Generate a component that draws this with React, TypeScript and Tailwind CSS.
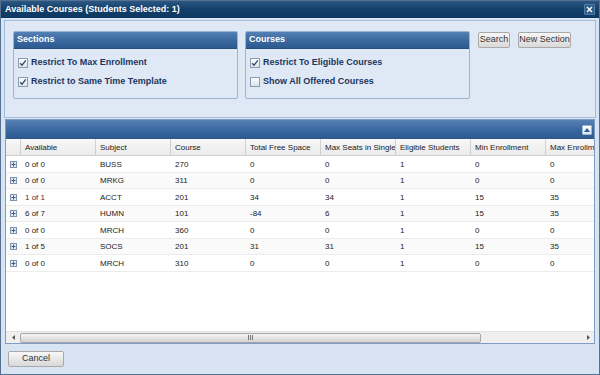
import React from "react";

type CourseRow = {
  available: string;
  subject: string;
  course: string;
  freeSpace: string;
  maxSeats: string;
  eligible: string;
  minEnroll: string;
  maxEnroll: string;
};

const columns = [
  "Available",
  "Subject",
  "Course",
  "Total Free Space",
  "Max Seats in Single",
  "Eligible Students",
  "Min Enrollment",
  "Max Enrollment",
];

const rows: CourseRow[] = [
  { available: "0 of 0", subject: "BUSS", course: "270", freeSpace: "0", maxSeats: "0", eligible: "1", minEnroll: "0", maxEnroll: "0" },
  { available: "0 of 0", subject: "MRKG", course: "311", freeSpace: "0", maxSeats: "0", eligible: "1", minEnroll: "0", maxEnroll: "0" },
  { available: "1 of 1", subject: "ACCT", course: "201", freeSpace: "34", maxSeats: "34", eligible: "1", minEnroll: "15", maxEnroll: "35" },
  { available: "6 of 7", subject: "HUMN", course: "101", freeSpace: "-84", maxSeats: "6", eligible: "1", minEnroll: "15", maxEnroll: "35" },
  { available: "0 of 0", subject: "MRCH", course: "360", freeSpace: "0", maxSeats: "0", eligible: "1", minEnroll: "0", maxEnroll: "0" },
  { available: "1 of 5", subject: "SOCS", course: "201", freeSpace: "31", maxSeats: "31", eligible: "1", minEnroll: "15", maxEnroll: "35" },
  { available: "0 of 0", subject: "MRCH", course: "310", freeSpace: "0", maxSeats: "0", eligible: "1", minEnroll: "0", maxEnroll: "0" },
];

const Checkbox = ({ checked }: { checked: boolean }) => (
  <div className="w-[10px] h-[10px] border border-[#8a9bb0] bg-gradient-to-b from-[#fdfdfd] to-[#dfe3e8] flex items-center justify-center shrink-0">
    {checked && (
      <svg width="8" height="8" viewBox="0 0 8 8">
        <path d="M1.2 4.2 L3 6.2 L6.8 1.4" fill="none" stroke="#2d4a73" strokeWidth="1.3" />
      </svg>
    )}
  </div>
);

const GroupBox = ({ title, items }: { title: string; items: { label: string; checked: boolean }[] }) => (
  <div className="w-[225px] h-[68px] border border-[#99b3d3] rounded-[2px] bg-[#dfe8f5] flex flex-col overflow-hidden">
    <div className="h-[17px] bg-gradient-to-b from-[#5381b5] via-[#3c6aa0] to-[#2d5a8f] border-b border-[#27507f] flex items-center pl-[3px] text-white font-bold text-[9px]">
      {title}
    </div>
    <div className="flex flex-col gap-[9px] pl-[4px] pt-[9px]">
      {items.map((it) => (
        <div key={it.label} className="flex items-center gap-[3px] h-[10px]">
          <Checkbox checked={it.checked} />
          <span className="text-[9px] font-bold text-[#1a3761]">{it.label}</span>
        </div>
      ))}
    </div>
  </div>
);

const Button = ({ label, className }: { label: string; className: string }) => (
  <div
    className={`h-[16px] border border-[#a9a9a9] rounded-[2px] bg-gradient-to-b from-[#f7f7f7] to-[#d9d9d9] flex items-center justify-center text-[9px] text-[#333] ${className}`}
  >
    {label}
  </div>
);

const Expander = () => (
  <div className="w-[7px] h-[7px] border border-[#7d93ae] bg-[#e3e9f1] flex items-center justify-center">
    <svg width="5" height="5" viewBox="0 0 5 5">
      <path d="M0.5 2.5 H4.5 M2.5 0.5 V4.5" stroke="#3f5d82" strokeWidth="1" />
    </svg>
  </div>
);

export default function App() {
  return (
    <div
      className="w-[600px] h-[375px] border border-[#56708f] bg-[#d9e4f2] flex flex-col overflow-hidden"
      style={{ fontFamily: '"Liberation Sans", Arial, sans-serif' }}
    >
      {/* title bar */}
      <div className="h-[17px] shrink-0 bg-gradient-to-b from-[#2b5784] via-[#123f6a] to-[#0e3862] flex items-center justify-between pl-[4px] pr-[4px]">
        <span className="text-white font-bold text-[9px]">Available Courses (Students Selected: 1)</span>
        <div className="w-[11px] h-[11px] bg-[#2f5d89] border border-[#557ea6] rounded-[1px] flex items-center justify-center">
          <svg width="7" height="7" viewBox="0 0 7 7">
            <path d="M1 1 L6 6 M6 1 L1 6" stroke="#ffffff" strokeWidth="1.4" />
          </svg>
        </div>
      </div>

      <div className="flex flex-col px-[3px] pt-[2px] flex-1">
        {/* filter panel */}
        <div className="h-[98px] shrink-0 border border-[#a3bcdb] bg-[#dfe9f6] flex items-start gap-[7px] pl-[8px] pt-[10px]">
          <GroupBox
            title="Sections"
            items={[
              { label: "Restrict To Max Enrollment", checked: true },
              { label: "Restrict to Same Time Template", checked: true },
            ]}
          />
          <GroupBox
            title="Courses"
            items={[
              { label: "Restrict To Eligible Courses", checked: true },
              { label: "Show All Offered Courses", checked: false },
            ]}
          />
          <div className="flex gap-[8px] pt-[1px] pl-[1px]">
            <Button label="Search" className="w-[32px]" />
            <Button label="New Section" className="w-[53px]" />
          </div>
        </div>

        {/* grid */}
        <div className="h-[225px] shrink-0 mt-[1px] ml-[1px] mr-[1px] border border-[#7f9cc2] bg-white flex flex-col">
          <div className="h-[19px] shrink-0 bg-gradient-to-b from-[#5782b3] via-[#3b68a0] to-[#2b588c] flex items-center justify-end pr-[2px]">
            <div className="w-[10px] h-[10px] bg-gradient-to-b from-white to-[#dbe6f3] border border-[#9fb8d6] rounded-[1px] flex items-center justify-center">
              <svg width="6" height="4" viewBox="0 0 6 4">
                <path d="M0 4 L3 0 L6 4 Z" fill="#2d5b94" />
              </svg>
            </div>
          </div>
          <div className="flex-1 flex flex-col overflow-hidden">
            {/* column headers */}
            <div className="h-[17px] shrink-0 flex bg-gradient-to-b from-[#f7f7f7] to-[#ebebeb] border-b border-[#d0d0d0] text-[8px] text-[#222]">
              <div className="w-[15px] shrink-0 border-r border-[#d0d0d0]" />
              {columns.map((c) => (
                <div
                  key={c}
                  className="w-[75px] shrink-0 border-r border-[#d0d0d0] pl-[4px] pt-[1px] flex items-center whitespace-nowrap overflow-hidden"
                >
                  {c}
                </div>
              ))}
            </div>
            {/* rows */}
            <div className="flex-1 flex flex-col">
              {rows.map((r, i) => {
                const cells = [r.available, r.subject, r.course, r.freeSpace, r.maxSeats, r.eligible, r.minEnroll, r.maxEnroll];
                return (
                  <div
                    key={i}
                    className={`h-[16.5px] shrink-0 flex border-b border-[#ececec] text-[8px] text-[#222] ${i % 2 === 1 ? "bg-[#fafafa]" : "bg-white"}`}
                  >
                    <div className="w-[15px] shrink-0 flex items-center justify-center pt-[1px]">
                      <Expander />
                    </div>
                    {cells.map((v, j) => (
                      <div
                        key={j}
                        className={`w-[75px] shrink-0 pl-[4px] pt-[2px] flex items-center ${j === 0 && r.available === "1 of 1" ? "text-[#5a2536]" : ""}`}
                      >
                        {v}
                      </div>
                    ))}
                  </div>
                );
              })}
            </div>
            {/* horizontal scrollbar */}
            <div className="h-[12px] shrink-0 flex items-center bg-[#efefef] border-t border-[#e2e2e2]">
              <div className="w-[14px] h-full flex items-center justify-center">
                <svg width="3" height="5" viewBox="0 0 3 5">
                  <path d="M3 0 L0 2.5 L3 5 Z" fill="#555" />
                </svg>
              </div>
              <div className="w-[461px] h-[10px] border border-[#a7a7a7] rounded-[2px] bg-gradient-to-b from-[#f6f6f6] via-[#e4e4e4] to-[#d2d2d2] flex items-center justify-center">
                <svg width="6" height="5" viewBox="0 0 6 5">
                  <path d="M0.5 0 V5 M2.5 0 V5 M4.5 0 V5" stroke="#777" strokeWidth="1" />
                </svg>
              </div>
              <div className="flex-1" />
              <div className="w-[12px] h-full flex items-center justify-center">
                <svg width="3" height="5" viewBox="0 0 3 5">
                  <path d="M0 0 L3 2.5 L0 5 Z" fill="#555" />
                </svg>
              </div>
            </div>
          </div>
        </div>

        {/* footer */}
        <div className="pt-[7px] pl-[4px]">
          <Button label="Cancel" className="w-[56px]" />
        </div>
      </div>
    </div>
  );
}
